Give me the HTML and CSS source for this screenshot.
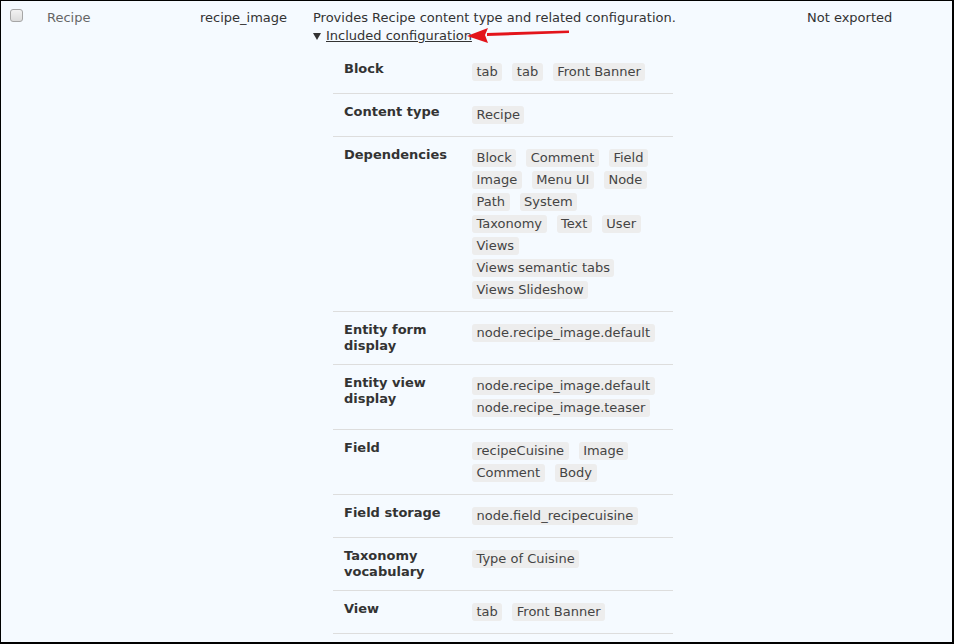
FILE: index.html
```html
<!DOCTYPE html>
<html>
<head>
<meta charset="utf-8">
<link rel="stylesheet" href="styles.css">
</head>
<body>
<div class="page">
  <div class="row">
    <div class="cell cell-check"><span class="checkbox"></span></div>
    <div class="cell cell-name">Recipe</div>
    <div class="cell cell-machine">recipe_image</div>
    <div class="cell cell-desc">
      <div class="desc-text">Provides Recipe content type and related configuration.</div>
      <div class="summary"><span class="caret"></span><span class="summary-link">Included configuration</span></div>
      <div class="config">
        <div class="config-row">
          <div class="config-label">Block</div>
          <div class="config-values"><span class="tag">tab</span><span class="tag">tab</span><span class="tag">Front Banner</span></div>
        </div>
        <div class="config-row">
          <div class="config-label">Content type</div>
          <div class="config-values"><span class="tag">Recipe</span></div>
        </div>
        <div class="config-row">
          <div class="config-label">Dependencies</div>
          <div class="config-values"><span class="tag">Block</span><span class="tag">Comment</span><span class="tag">Field</span><span class="tag">Image</span><span class="tag">Menu UI</span><span class="tag">Node</span><span class="tag">Path</span><span class="tag">System</span><span class="tag">Taxonomy</span><span class="tag">Text</span><span class="tag">User</span><span class="tag">Views</span><span class="tag">Views semantic tabs</span><span class="tag">Views Slideshow</span></div>
        </div>
        <div class="config-row">
          <div class="config-label">Entity form display</div>
          <div class="config-values"><span class="tag">node.recipe_image.default</span></div>
        </div>
        <div class="config-row">
          <div class="config-label">Entity view display</div>
          <div class="config-values"><span class="tag">node.recipe_image.default</span><span class="tag">node.recipe_image.teaser</span></div>
        </div>
        <div class="config-row">
          <div class="config-label">Field</div>
          <div class="config-values"><span class="tag">recipeCuisine</span><span class="tag">Image</span><span class="tag">Comment</span><span class="tag">Body</span></div>
        </div>
        <div class="config-row">
          <div class="config-label">Field storage</div>
          <div class="config-values"><span class="tag">node.field_recipecuisine</span></div>
        </div>
        <div class="config-row">
          <div class="config-label">Taxonomy vocabulary</div>
          <div class="config-values"><span class="tag">Type of Cuisine</span></div>
        </div>
        <div class="config-row">
          <div class="config-label">View</div>
          <div class="config-values"><span class="tag">tab</span><span class="tag">Front Banner</span></div>
        </div>
      </div>
    </div>
    <div class="cell cell-status">Not exported</div>
  </div>
  <svg class="arrow" width="110" height="24" viewBox="0 0 110 24">
    <path d="M20 10 L102 7.5 L102 10 L20 13 Z" fill="#e3141b"/>
    <path d="M0 13 L21 5 L18 12 L21 20 Z" fill="#e3141b"/>
  </svg>
</div>
</body>
</html>
```
FILE: styles.css
```css
html, body {
  margin: 0;
  padding: 0;
  background: #f5faff;
}
.page {
  position: relative;
  box-sizing: border-box;
  width: 954px;
  height: 644px;
  overflow: hidden;
  background: #f5faff;
  border-top: 1px solid #000;
  border-left: 1px solid #000;
  border-right: 2px solid #000;
  border-bottom: 2px solid #000;
  font-family: "DejaVu Sans", sans-serif;
  font-size: 13px;
  line-height: 18px;
  color: #333;
}
.row {
  display: grid;
  grid-template-columns: 46px 153px 113px 494px 1fr;
  padding-top: 8px;
}
.cell-check {
  padding-left: 9px;
}
.checkbox {
  display: block;
  box-sizing: border-box;
  width: 13px;
  height: 13px;
  border: 1px solid #a6a6a6;
  border-radius: 3px;
  background: linear-gradient(#f2f2f2, #dcdcdc);
}
.cell-name {
  color: #666;
}
.summary {
  display: flex;
  align-items: center;
}
.caret {
  width: 0;
  height: 0;
  border-left: 4px solid transparent;
  border-right: 4px solid transparent;
  border-top: 7px solid #333;
  margin: 1px 5px 0 0;
}
.summary-link {
  text-decoration: underline;
}
.config {
  margin: 6px 0 0 20px;
  width: 340px;
  border-bottom: 1px solid #dddddd;
}
.config-row {
  display: grid;
  grid-template-columns: 128px 1fr;
  border-top: 1px solid #dddddd;
}
.config-row:first-child {
  border-top: 0;
}
.config-label {
  padding: 10px 10px 10px 11px;
  font-weight: bold;
  line-height: 16px;
  color: #333;
}
.config-values {
  display: flex;
  flex-wrap: wrap;
  align-content: flex-start;
  column-gap: 10px;
  padding: 12px 18px 8px 11px;
}
.tag {
  display: block;
  height: 18px;
  line-height: 18px;
  margin-bottom: 4px;
  padding: 0 4.5px;
  background: #ededed;
  border-radius: 3px;
  color: #444;
  white-space: nowrap;
}
.arrow {
  position: absolute;
  left: 466px;
  top: 22px;
}
```
